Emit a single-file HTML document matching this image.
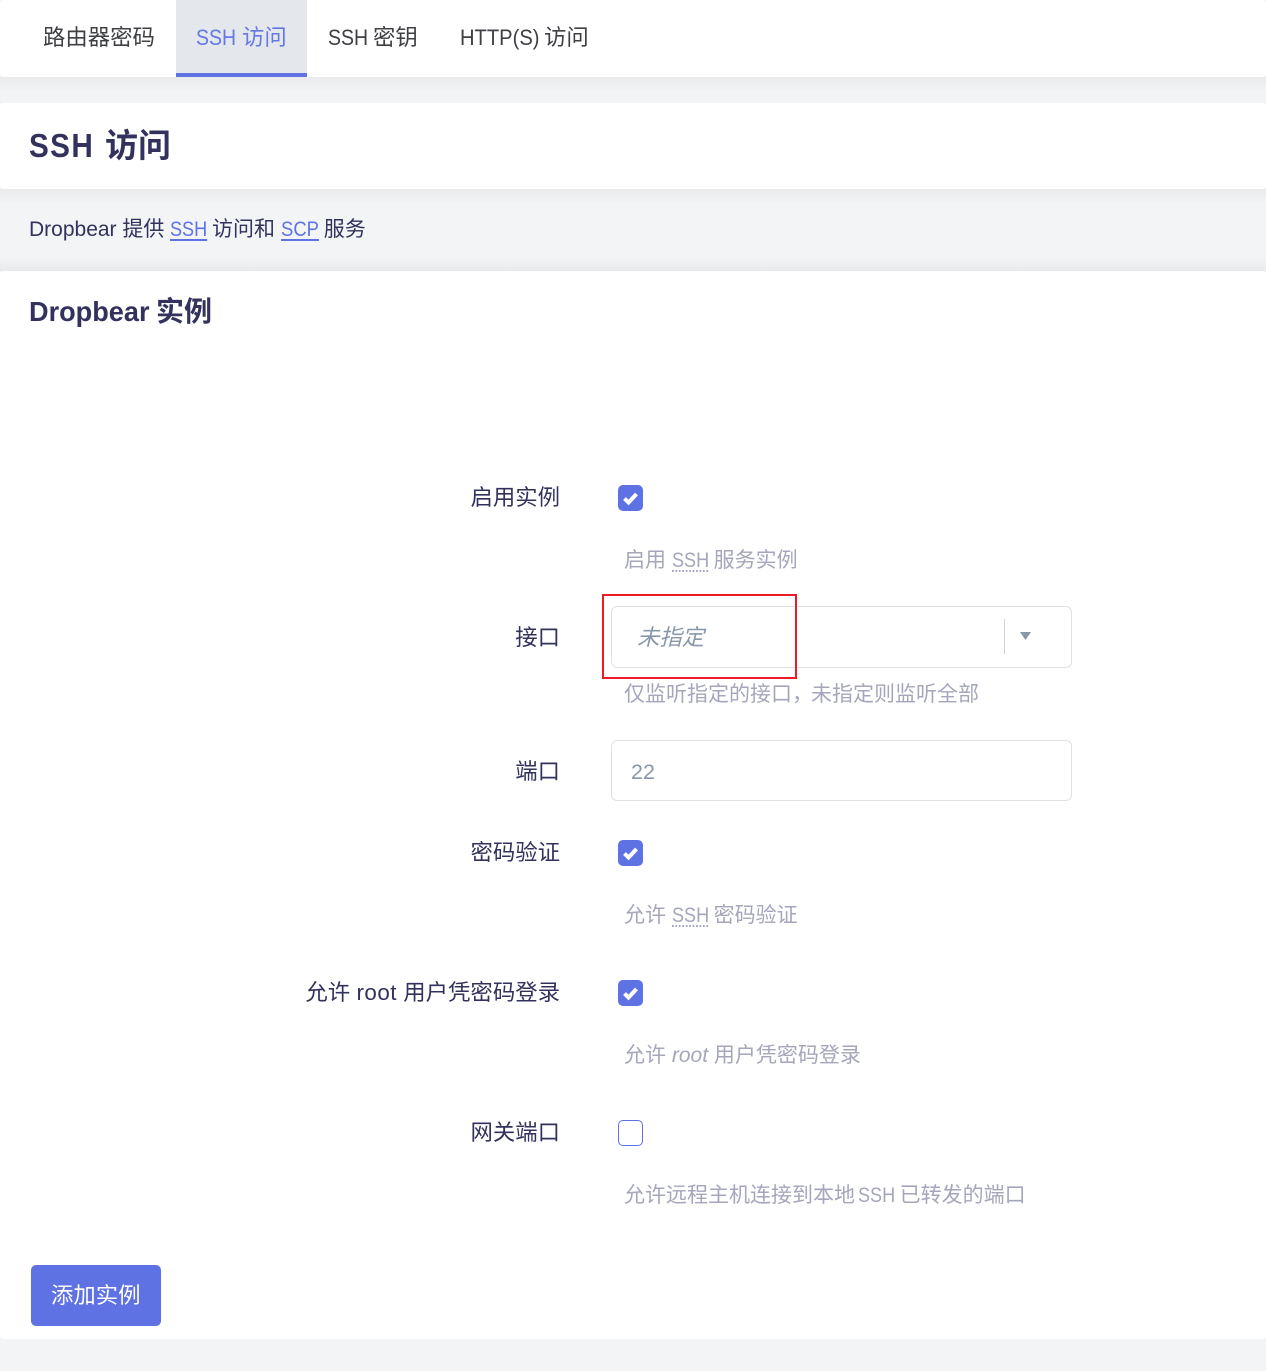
<!DOCTYPE html>
<html lang="zh-CN"><head><meta charset="utf-8">
<style>
html,body{margin:0;padding:0;background:#f3f4f5}
body{width:1266px;height:1371px;position:relative;overflow:hidden;font-family:"Liberation Sans","WenQuanYi Zen Hei","Noto Sans CJK SC",sans-serif;}
.b{position:absolute;left:0;width:1266px;background:#fff;border-radius:3px}
.g{position:absolute;left:0;width:1266px;height:14px;background:linear-gradient(#e9eaec,#f3f4f5)}
.t{position:absolute;white-space:nowrap;line-height:30px}
.tab{font-size:22.4px;color:#3e4044;top:23px}
.lab{font-size:22.4px;color:#32325d;right:706px}
.d{font-size:21px;color:#a5a6bb;left:624px}
.c{display:inline-block;transform-origin:0 50%;white-space:nowrap;font-style:normal;font-weight:inherit}
.d abbr.c{text-decoration:underline dotted;text-decoration-thickness:2px;text-underline-offset:3px}
.cb{position:absolute;left:618px;width:25px;height:26px;border-radius:5px;background:#5e72e4}
.cb svg{position:absolute;left:0;top:0}
.in{position:absolute;left:611px;width:459px;border:1px solid #dfe1e5;border-radius:6px;background:#fff}
a{color:#5e72e4;text-decoration:underline;text-underline-offset:3px}
</style></head><body>
<div class="b" style="top:0;height:77px"></div>
<div style="position:absolute;left:176px;top:0;width:131px;height:73px;background:#e4e8ec"></div>
<div style="position:absolute;left:176px;top:73px;width:131px;height:4px;background:#5e72e4"></div>
<span class="t tab" style="left:43px">路由器密码</span>
<span class="t tab" style="left:196px;color:#6478e6"><i class="c" style="width:46px;transform:scaleX(.87)">SSH</i>访问</span>
<span class="t tab" style="left:328px"><i class="c" style="width:45px;transform:scaleX(.87)">SSH</i>密钥</span>
<span class="t tab" style="left:460px"><i class="c" style="width:84px;transform:scaleX(.9)">HTTP(S)</i>访问</span>
<div class="g" style="top:77px"></div>

<div class="b" style="top:103px;height:86px"></div>
<span class="t" style="left:29px;top:129px;line-height:34px;font-size:33px;font-weight:bold;color:#32325d"><i class="c" style="width:76px;letter-spacing:1.500px;transform:scaleX(.9)">SSH</i>访问</span>
<div class="g" style="top:189px"></div>
<span class="t" style="left:29px;top:215px;font-size:21px;color:#32325d">Dropbear 提供 <a class="c" href="#" style="width:36px;transform:scaleX(.86)">SSH</a> 访问和 <a class="c" href="#" style="width:37px;transform:scaleX(.88)">SCP</a> 服务</span>
<div class="g" style="top:257px;height:14px;background:linear-gradient(#f3f4f5,#e9eaec)"></div>

<div class="b" style="top:271px;height:1068px"></div>
<span class="t" style="left:29px;top:297px;font-size:28px;font-weight:bold;color:#32325d"><i class="c" style="width:127px;transform:scaleX(.968)">Dropbear</i>实例</span>

<span class="t lab" style="top:483px">启用实例</span>
<div class="cb" style="top:485px"><svg width="25" height="26" viewBox="0 0 25 26"><path d="M6.500 13.500l4 4 8-8.500" fill="none" stroke="#fff" stroke-width="4"/></svg></div>
<span class="t d" style="top:546px">启用 <abbr class="c" style="width:36px;transform:scaleX(.86)">SSH</abbr> 服务实例</span>

<span class="t lab" style="top:623px">接口</span>
<div class="in" style="top:606px;height:60px"></div>
<span class="t" style="left:637px;top:623px;font-size:22.4px;font-style:italic;color:#8898aa">未指定</span>
<div style="position:absolute;left:1004px;top:619px;width:1px;height:35px;background:#cfd3d8"></div>
<svg style="position:absolute;left:1020px;top:631px" width="11" height="10"><path d="M0 1h11L5.500 9z" fill="#8898aa"/></svg>
<div style="position:absolute;left:602px;top:594px;width:191px;height:81px;border:2px solid #ed1c24"></div>
<span class="t d" style="top:680px">仅监听指定的接口<span style="margin-right:-2px">，</span>未指定则监听全部</span>

<span class="t lab" style="top:757px">端口</span>
<div class="in" style="top:740px;height:59px"></div>
<span class="t" style="left:631px;top:757px;font-size:21.5px;color:#8898aa">22</span>

<span class="t lab" style="top:838px">密码验证</span>
<div class="cb" style="top:840px"><svg width="25" height="26" viewBox="0 0 25 26"><path d="M6.500 13.500l4 4 8-8.500" fill="none" stroke="#fff" stroke-width="4"/></svg></div>
<span class="t d" style="top:901px">允许 <abbr class="c" style="width:36px;transform:scaleX(.86)">SSH</abbr> 密码验证</span>

<span class="t lab" style="top:978px">允许 <span style="letter-spacing:.5px">root</span> 用户凭密码登录</span>
<div class="cb" style="top:980px"><svg width="25" height="26" viewBox="0 0 25 26"><path d="M6.500 13.500l4 4 8-8.500" fill="none" stroke="#fff" stroke-width="4"/></svg></div>
<span class="t d" style="top:1041px">允许 <i>root</i> 用户凭密码登录</span>

<span class="t lab" style="top:1118px">网关端口</span>
<div class="cb" style="top:1120px;background:#fff;border:1px solid #5e72e4;width:23px;height:24px"></div>
<span class="t d" style="top:1181px">允许远程主机连接到本地 <i class="c" style="width:36px;margin-left:-3px;transform:scaleX(.86)">SSH</i> 已转发的端口</span>

<div style="position:absolute;left:31px;top:1265px;width:130px;height:61px;background:#5e72e4;border-radius:5px"></div>
<span class="t" style="left:51px;top:1281px;font-size:22.4px;color:#fff">添加实例</span>
</body></html>
